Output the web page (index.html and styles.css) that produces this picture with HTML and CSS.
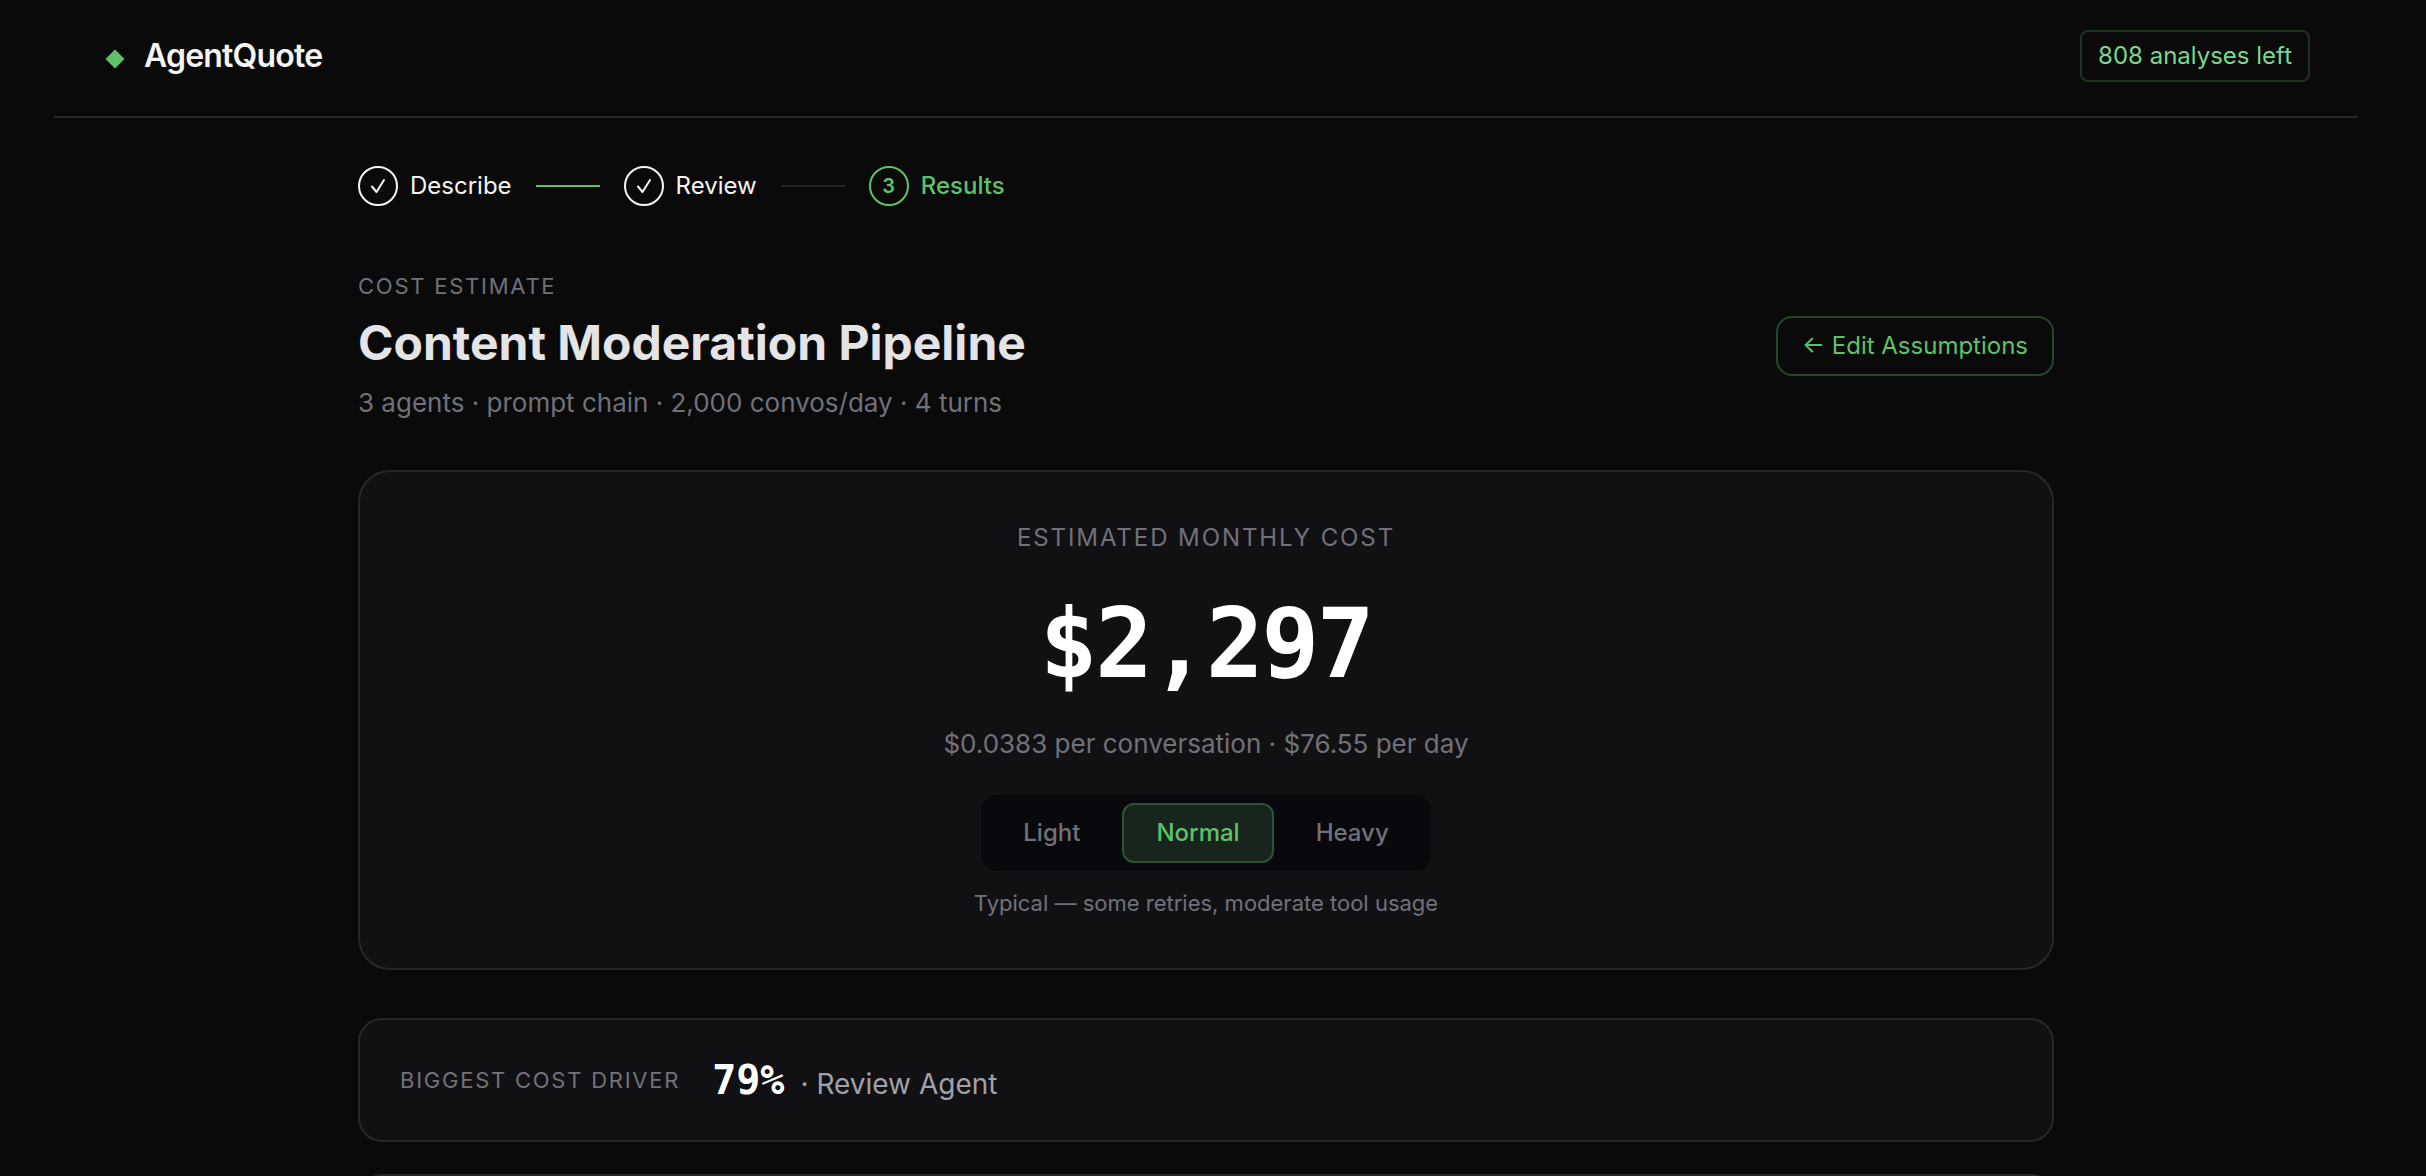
FILE: index.html
```html
<!DOCTYPE html>
<html lang="en">
<head>
<meta charset="utf-8">
<meta name="viewport" content="width=device-width, initial-scale=1">
<title>AgentQuote</title>
<link rel="stylesheet" href="styles.css">
</head>
<body>
<div class="app">
  <header class="header">
    <a class="brand" href="#">
      <svg class="brand-mark" viewBox="0 0 20 20" aria-hidden="true"><path d="M10 0.5 19.5 10 10 19.5 0.5 10Z" fill="currentColor"/></svg>
      <span class="brand-name">AgentQuote</span>
    </a>
    <span class="quota">808 analyses left</span>
  </header>

  <main class="content">
    <ol class="steps">
      <li class="step">
        <span class="step-dot"><svg viewBox="0 0 16 16" aria-hidden="true"><path d="M2 8.5 6.5 14 14 2"/></svg></span>
        Describe
      </li>
      <li class="step-line step-line-done" aria-hidden="true"></li>
      <li class="step">
        <span class="step-dot"><svg viewBox="0 0 16 16" aria-hidden="true"><path d="M2 8.5 6.5 14 14 2"/></svg></span>
        Review
      </li>
      <li class="step-line" aria-hidden="true"></li>
      <li class="step step-current" aria-current="step">
        <span class="step-dot">3</span>
        Results
      </li>
    </ol>

    <section class="title-row">
      <div>
        <p class="eyebrow">COST ESTIMATE</p>
        <h1 class="title">Content Moderation Pipeline</h1>
        <p class="subtitle">3 agents · prompt chain · 2,000 convos/day · 4 turns</p>
      </div>
      <button class="edit-button" type="button">← Edit Assumptions</button>
    </section>

    <section class="card cost-card">
      <h2 class="cost-label">ESTIMATED MONTHLY COST</h2>
      <p class="cost-value">$2,297</p>
      <p class="cost-detail">$0.0383 per conversation · $76.55 per day</p>
      <div class="usage" role="group" aria-label="Usage level">
        <button class="usage-option" type="button">Light</button>
        <button class="usage-option usage-selected" type="button" aria-pressed="true">Normal</button>
        <button class="usage-option" type="button">Heavy</button>
      </div>
      <p class="usage-hint">Typical — some retries, moderate tool usage</p>
    </section>

    <section class="card driver-card">
      <h2 class="eyebrow">BIGGEST COST DRIVER</h2>
      <p class="driver"><strong class="driver-share">79%</strong><span class="driver-name">· Review Agent</span></p>
    </section>

    <section class="card next-card"></section>
  </main>
</div>
</body>
</html>
```

FILE: styles.css
```css
:root {
  --bg: #0a0a0a;
  --surface: #111113;
  --line: #27272a;
  --text: #f4f4f5;
  --muted: #71717a;
  --green: #5ec269;
  --mono: "DejaVu Sans Mono", monospace;
}

* { box-sizing: border-box; }

body {
  margin: 0;
  background: var(--bg);
  color: var(--text);
  font-family: Inter, sans-serif;
  font-size: 24px;
  line-height: 36px;
}

h1, h2, p, ol { margin: 0; padding: 0; }
button { font: inherit; cursor: pointer; }

.app {
  height: 100vh;
  overflow: hidden;
  padding-right: 14px;
}

.header {
  display: flex;
  align-items: center;
  justify-content: space-between;
  max-width: 2304px;
  margin: 0 auto;
  padding: 30px 48px 34px;
  border-bottom: 2px solid var(--line);
}

.brand {
  display: flex;
  align-items: center;
  gap: 19px;
  color: var(--text);
  text-decoration: none;
}
.brand-mark {
  width: 20px;
  height: 20px;
  margin: 6px 0 0 3px;
  color: var(--green);
}
.brand-name {
  font-size: 32px;
  font-weight: 600;
  letter-spacing: -0.025em;
}

.quota {
  padding: 6px 16px;
  border: 2px solid #1c3420;
  border-radius: 8px;
  color: #7bd888;
}

.content {
  max-width: 1696px;
  margin: 0 auto;
  padding-top: 48px;
}

.steps {
  display: flex;
  align-items: center;
  gap: 24px;
  list-style: none;
}
.step {
  display: flex;
  align-items: center;
  gap: 12px;
}
.step-dot {
  display: flex;
  align-items: center;
  justify-content: center;
  width: 40px;
  height: 40px;
  border: 2px solid currentColor;
  border-radius: 50%;
  font-size: 20px;
  font-weight: 600;
}
.step-dot svg {
  width: 16px;
  height: 16px;
  fill: none;
  stroke: currentColor;
  stroke-width: 2;
  stroke-linecap: round;
  stroke-linejoin: round;
}
.step-current { color: var(--green); font-weight: 500; }
.step-line {
  width: 64px;
  height: 2px;
  background: var(--line);
}
.step-line-done { background: var(--green); }

.title-row {
  display: flex;
  align-items: center;
  justify-content: space-between;
  margin-top: 64px;
}
.eyebrow {
  color: var(--muted);
  font-size: 22px;
  font-weight: 400;
  line-height: 32px;
  letter-spacing: 0.08em;
}
.title {
  margin-top: 13px;
  color: #e4e4e7;
  font-size: 48px;
  font-weight: 700;
  line-height: 56px;
}
.subtitle {
  margin-top: 13px;
  color: var(--muted);
  font-size: 26px;
  line-height: 38px;
}
.edit-button {
  padding: 10px 24px;
  border: 2px solid #26472a;
  border-radius: 16px;
  background: none;
  color: var(--green);
}

.card {
  border: 2px solid var(--line);
  border-radius: 24px;
  background: var(--surface);
}

.cost-card {
  display: flex;
  flex-direction: column;
  align-items: center;
  margin-top: 48px;
  padding: 48px;
  border-radius: 32px;
}
.cost-label {
  color: var(--muted);
  font-size: 24px;
  font-weight: 400;
  letter-spacing: 0.08em;
}
.cost-value {
  margin-top: 40px;
  color: #fff;
  font-family: var(--mono);
  font-size: 96px;
  font-weight: 700;
  line-height: 96px;
  letter-spacing: -0.025em;
}
.cost-detail {
  margin-top: 32px;
  color: var(--muted);
  font-size: 26px;
  line-height: 40px;
}
.usage {
  display: flex;
  gap: 8px;
  margin-top: 31px;
  padding: 8px;
  border-radius: 16px;
  background: #09090d;
}
.usage-option {
  padding: 10px 32px;
  border: 2px solid transparent;
  border-radius: 12px;
  background: none;
  color: var(--muted);
  font-weight: 500;
}
.usage-selected {
  border-color: #2c5434;
  background: #18251d;
  color: var(--green);
}
.usage-hint {
  margin-top: 16px;
  color: var(--muted);
  font-size: 22px;
  line-height: 33px;
}

.driver-card {
  display: flex;
  align-items: center;
  gap: 32px;
  margin-top: 48px;
  padding: 36px 40px;
}
.driver {
  display: flex;
  align-items: baseline;
  gap: 16px;
}
.driver-share {
  color: #fff;
  font-family: var(--mono);
  font-size: 40px;
  line-height: 48px;
}
.driver-name {
  color: #a1a1aa;
  font-size: 28px;
}

.next-card {
  height: 200px;
  margin-top: 32px;
}
```
